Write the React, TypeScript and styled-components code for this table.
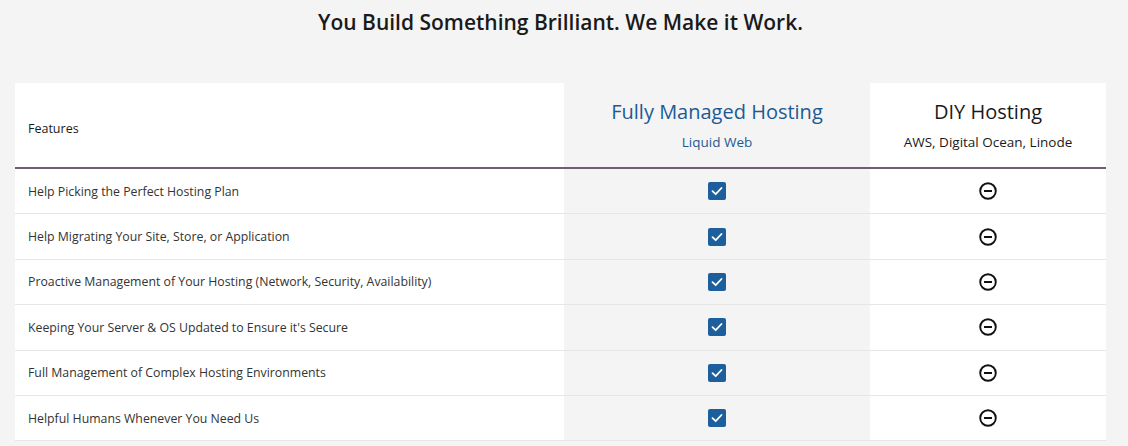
import styled, { createGlobalStyle } from "styled-components";

const GlobalStyle = createGlobalStyle`
  *, *::before, *::after {
    box-sizing: border-box;
  }
  body {
    margin: 0;
    background: #f4f4f4;
    font-family: "Open Sans", "Liberation Sans", sans-serif;
    color: #222;
  }
`;

const Page = styled.div`
  padding: 0 22px 0 15px;
`;

const Title = styled.h2`
  margin: 0;
  padding-top: 8px;
  height: 83px;
  text-align: center;
  font-size: 21px;
  font-weight: 600;
  line-height: 28px;
  color: #1a1a1a;
`;

const Table = styled.div`
  display: grid;
  grid-template-columns: 549px 306px 1fr;
  background: #fff;
`;

const HeadCell = styled.div<{ $shade?: boolean; $left?: boolean }>`
  height: 86px;
  display: flex;
  flex-direction: column;
  justify-content: center;
  align-items: ${(p) => (p.$left ? "flex-start" : "center")};
  padding: ${(p) => (p.$left ? "6px 0 0 13px" : "0 0 2px")};
  background: ${(p) => (p.$shade ? "#f4f4f4" : "#fff")};
  border-bottom: 2px solid #6e5f6e;
`;

const Label = styled.span`
  font-size: 12.5px;
  color: #1a1a1a;
`;

const PlanName = styled.div<{ $blue?: boolean }>`
  font-size: 20px;
  line-height: 28px;
  color: ${(p) => (p.$blue ? "#1d5a94" : "#1a1a1a")};
`;

const PlanSub = styled.div<{ $blue?: boolean }>`
  margin-top: 7px;
  font-size: 13.5px;
  line-height: 18px;
  color: ${(p) => (p.$blue ? "#1d5a94" : "#1a1a1a")};
`;

const Cell = styled.div<{ $shade?: boolean; $left?: boolean }>`
  height: 45.4px;
  display: flex;
  align-items: center;
  justify-content: ${(p) => (p.$left ? "flex-start" : "center")};
  padding-left: ${(p) => (p.$left ? "13px" : "0")};
  background: ${(p) => (p.$shade ? "#f4f4f4" : "#fff")};
  border-bottom: 1px solid #e6e6e6;
  font-size: 12.3px;
  color: #333;
`;

const Check = () => (
  <svg width="18" height="18" viewBox="0 0 18 18">
    <rect x="0" y="0" width="18" height="18" rx="2" fill="#1d5e9c" />
    <path d="M4.5 9.2 L7.7 12.2 L13.5 6" fill="none" stroke="#fff" strokeWidth="1.8" strokeLinecap="round" strokeLinejoin="round" />
  </svg>
);

const Minus = () => (
  <svg width="18" height="18" viewBox="0 0 18 18">
    <circle cx="9" cy="9" r="7.8" fill="none" stroke="#111" strokeWidth="1.9" />
    <rect x="5" y="8" width="8" height="2" fill="#111" />
  </svg>
);

const features = [
  "Help Picking the Perfect Hosting Plan",
  "Help Migrating Your Site, Store, or Application",
  "Proactive Management of Your Hosting (Network, Security, Availability)",
  "Keeping Your Server & OS Updated to Ensure it's Secure",
  "Full Management of Complex Hosting Environments",
  "Helpful Humans Whenever You Need Us",
];

export default function App() {
  return (
    <Page>
      <GlobalStyle />
      <Title>You Build Something Brilliant. We Make it Work.</Title>
      <Table>
        <HeadCell $left>
          <Label>Features</Label>
        </HeadCell>
        <HeadCell $shade>
          <PlanName $blue>Fully Managed Hosting</PlanName>
          <PlanSub $blue>Liquid Web</PlanSub>
        </HeadCell>
        <HeadCell>
          <PlanName>DIY Hosting</PlanName>
          <PlanSub>AWS, Digital Ocean, Linode</PlanSub>
        </HeadCell>
        {features.map((f) => (
          <>
            <Cell key={f + "a"} $left>{f}</Cell>
            <Cell key={f + "b"} $shade><Check /></Cell>
            <Cell key={f + "c"}><Minus /></Cell>
          </>
        ))}
      </Table>
    </Page>
  );
}
